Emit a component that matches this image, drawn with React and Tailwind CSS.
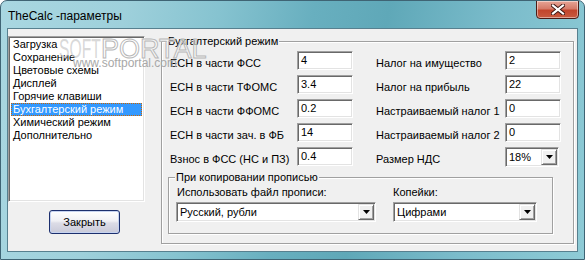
import React from "react";

const items = [
  "Загрузка",
  "Сохранение",
  "Цветовые схемы",
  "Дисплей",
  "Горячие клавиши",
  "Бухгалтерский режим",
  "Химический режим",
  "Дополнительно",
];

function Arrow() {
  return (
    <div className="w-[16px] h-[16px] shrink-0 bg-[#f0f0f0] border border-t-[#e3e3e3] border-l-[#e3e3e3] border-r-[#696969] border-b-[#696969] shadow-[inset_1px_1px_0_#ffffff,inset_-1px_-1px_0_#a0a0a0] flex items-center justify-center">
      <svg width="7" height="4" viewBox="0 0 7 4">
        <path d="M0 0h7L3.5 4z" fill="#000" />
      </svg>
    </div>
  );
}

function Field({ value, className = "w-[56px]" }) {
  return (
    <div className={`${className} h-[19px] shrink-0 bg-white border border-t-[#a0a0a0] border-l-[#a0a0a0] border-r-white border-b-white shadow-[inset_1px_1px_0_#696969,inset_-1px_-1px_0_#e3e3e3] pl-[3px] pt-[2px] leading-[13px]`}>
      {value}
    </div>
  );
}

function Combo({ value, className }) {
  return (
    <div className={`${className} h-[20px] shrink-0 bg-white border border-t-[#a0a0a0] border-l-[#a0a0a0] border-r-white border-b-white shadow-[inset_1px_1px_0_#696969,inset_-1px_-1px_0_#e3e3e3] p-[1px] flex items-start`}>
      <div className="flex-1 pl-[2px] pt-[2px] leading-[13px]">{value}</div>
      <Arrow />
    </div>
  );
}

function Row({ label, children }) {
  return (
    <div className="h-[19px] flex justify-between items-start">
      <span className="pt-[6px] leading-[13px] whitespace-nowrap">{label}</span>
      {children}
    </div>
  );
}

export default function App() {
  return (
    <div className="w-[585px] h-[260px] bg-white font-['Liberation_Sans',Arial,sans-serif] text-[11px] text-black">
      <div className="relative w-[585px] h-[260px] rounded-t-[7px] overflow-hidden border border-[#3f6474] bg-[linear-gradient(100deg,#a9d7e1_0%,#9ed0db_20%,#86c3d0_35%,#68afbf_50%,#5fa8b8_62%,#7bbccb_80%,#8ecbd6_100%)] flex flex-col">
        {/* title bar */}
        <div className="h-[27px] shrink-0 flex items-center pl-[7px] pt-[2px] font-['Liberation_Sans',Arial,sans-serif] text-[12px] text-black">
          TheCalc -параметры
        </div>
        {/* close button */}
        <div className="absolute top-[-1px] right-[5px] w-[43px] h-[19px] rounded-b-[4px] border border-[#4b1c16] bg-[linear-gradient(180deg,#e7a596_0%,#d57b69_45%,#c2452c_55%,#c85a3f_100%)] shadow-[inset_0_0_0_1px_rgba(255,255,255,0.45)] flex items-center justify-center">
          <svg width="14" height="11" viewBox="0 0 14 11">
            <path d="M2 1.5L12 9.5M12 1.5L2 9.5" stroke="#3a1410" strokeWidth="4" strokeLinecap="square" />
            <path d="M2 1.5L12 9.5M12 1.5L2 9.5" stroke="#ffffff" strokeWidth="2.2" strokeLinecap="square" />
          </svg>
        </div>

        {/* client area */}
        <div className="ml-[6px] w-[571px] h-[224px] shrink-0 bg-[#f0f0f0] border border-[#57808f] flex items-start">
          {/* left column */}
          <div className="flex flex-col mt-[7px]">
            <div className="w-[137px] h-[166px] bg-white border border-t-[#a0a0a0] border-l-[#a0a0a0] border-r-white border-b-white shadow-[inset_1px_1px_0_#696969,inset_-1px_-1px_0_#e3e3e3] p-[2px] pt-[1px]">
              {items.map((t, i) =>
                i === 5 ? (
                  <div
                    key={t}
                    className="h-[13px] leading-[11px] pl-[1px] bg-[#3399ff] text-white border border-dotted border-[#cc6600] whitespace-nowrap"
                  >
                    {t}
                  </div>
                ) : (
                  <div key={t} className="h-[13px] leading-[13px] pl-[2px] whitespace-nowrap">
                    {t}
                  </div>
                )
              )}
            </div>
            <div className="ml-[41px] mt-[8px] w-[71px] h-[24px] rounded-[3px] border border-[#1c2f6e] bg-[linear-gradient(180deg,#ffffff_0%,#f0f0f4_45%,#dcdce6_55%,#c8c9d8_100%)] shadow-[inset_0_0_0_1px_#c6d3f0] flex items-center justify-center">
              Закрыть
            </div>
          </div>

          {/* right group */}
          <div className="relative ml-[16px] mt-[12px] w-[413px] h-[203px] border border-[#a0a0a0] shadow-[inset_1px_1px_0_#ffffff,1px_1px_0_#ffffff]">
            <span className="absolute left-[5px] top-[-7px] px-[1px] bg-[#f0f0f0] leading-[13px] whitespace-nowrap">
              Бухгалтерский режим
            </span>
            <div className="flex gap-[23px] pl-[8px] pt-[9px]">
              <div className="w-[183px] flex flex-col gap-[5px]">
                <Row label="ЕСН в части ФСС"><Field value="4" /></Row>
                <Row label="ЕСН в части ТФОМС"><Field value="3.4" /></Row>
                <Row label="ЕСН в части ФФОМС"><Field value="0.2" /></Row>
                <Row label="ЕСН в части зач. в ФБ"><Field value="14" /></Row>
                <Row label="Взнос в ФСС (НС и ПЗ)"><Field value="0.4" /></Row>
              </div>
              <div className="w-[185px] flex flex-col gap-[5px]">
                <Row label="Налог на имущество"><Field value="2" /></Row>
                <Row label="Налог на прибыль"><Field value="22" /></Row>
                <Row label="Настраиваемый налог 1"><Field value="0" /></Row>
                <Row label="Настраиваемый налог 2"><Field value="0" /></Row>
                <Row label="Размер НДС"><Combo value="18%" className="w-[54px] mr-[2px]" /></Row>
              </div>
            </div>

            {/* inner group */}
            <div className="relative ml-[6px] mt-[11px] w-[385px] h-[57px] border border-[#a0a0a0] shadow-[inset_1px_1px_0_#ffffff,1px_1px_0_#ffffff]">
              <span className="absolute left-[6px] top-[-7px] px-[1px] bg-[#f0f0f0] leading-[13px] whitespace-nowrap">
                При копировании прописью
              </span>
              <div className="flex gap-[17px] pl-[7px] pt-[8px]">
                <div className="flex flex-col gap-[3px]">
                  <span className="leading-[13px] pl-[1px]">Использовать файл прописи:</span>
                  <Combo value="Русский, рубли" className="w-[200px]" />
                </div>
                <div className="flex flex-col gap-[3px]">
                  <span className="leading-[13px]">Копейки:</span>
                  <Combo value="Цифрами" className="w-[144px]" />
                </div>
              </div>
            </div>
          </div>
        </div>

        {/* watermark */}
        <div className="absolute left-[58px] top-[33px] pointer-events-none select-none">
          <div className="flex font-['Liberation_Sans',Arial,sans-serif] text-[27px] leading-[30px] text-white/50 [-webkit-text-stroke:1px_#b8b8b8]">
            <span className="inline-block w-[42px] scale-x-[0.58] origin-left text-[#c8c8c8]/70 [-webkit-text-stroke:0px]">SOFT</span>
            <span>PORTAL</span>
          </div>
          <div className="ml-[14px] mt-[-7px] text-[12px] leading-[12px] text-[#a8a8a8]">www.softportal.com</div>
        </div>
      </div>
    </div>
  );
}
